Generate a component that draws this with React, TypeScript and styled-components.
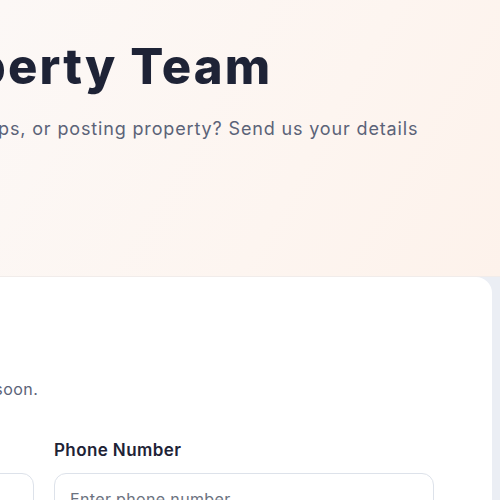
import React from "react";
import styled, { createGlobalStyle } from "styled-components";

const GlobalStyle = createGlobalStyle`
  html, body { margin: 0; padding: 0; background: #eef0f5; overflow: hidden; }
  body { font-family: Inter, "Noto Sans", sans-serif; -webkit-font-smoothing: antialiased; }
  * { box-sizing: border-box; }
`;

const Page = styled.div`
  width: 500px;
  height: 500px;
  overflow: hidden;
  background: #ebeef4;
`;

const Hero = styled.section`
  height: 277px;
  padding-top: 38px;
  background: linear-gradient(120deg, #fcf8f6 0%, #fdf5f0 60%, #fdf2eb 100%);
  border-bottom: 1px solid #f1ecea;
`;

const HeroInner = styled.div`
  margin-left: -443px;
  width: 1200px;
`;

const Title = styled.h1`
  margin: 0;
  font-size: 49px;
  line-height: 1.2;
  font-weight: 800;
  color: #1e2336;
  letter-spacing: 2.1px;
  white-space: nowrap;
`;

const Subtitle = styled.p`
  margin: 18px 0 0;
  font-size: 18px;
  line-height: 1.6;
  color: #5b6378;
  letter-spacing: 0.85px;
  white-space: nowrap;
`;

const Main = styled.main`
  padding-right: 8px;
`;

const Card = styled.div`
  margin-left: -402px;
  background: #ffffff;
  border-radius: 16px;
  padding: 46px 58px 40px 56px;
`;

const CardTitle = styled.h2`
  margin: 0;
  font-size: 28px;
  line-height: 1.3;
  font-weight: 700;
  color: #1e2336;
`;

const CardText = styled.p`
  margin: 18px 0 0;
  font-size: 16px;
  line-height: 1.6;
  color: #5b6378;
  letter-spacing: 0.42px;
  white-space: nowrap;
`;

const FormGrid = styled.div`
  margin-top: 35px;
  display: grid;
  grid-template-columns: 1fr 1fr;
  column-gap: 20px;
`;

const Field = styled.label`
  display: flex;
  flex-direction: column;
  gap: 10px;
`;

const Label = styled.span`
  font-size: 17px;
  line-height: 1.5;
  font-weight: 600;
  letter-spacing: 0.4px;
  color: #1e2336;
`;

const Input = styled.input`
  height: 52px;
  border: 1px solid #dde2ea;
  border-radius: 12px;
  padding: 0 15px;
  font-family: inherit;
  font-size: 16px;
  letter-spacing: 0.35px;
  color: #1e2336;
  background: #fff;
  outline: none;
  &::placeholder { color: #6b7280; }
`;

export default function App() {
  return (
    <Page>
      <GlobalStyle />
      <Hero>
        <HeroInner>
          <Title>Contact Our Property Team</Title>
          <Subtitle>Got questions about buying, renting, partnerships, or posting property? Send us your details</Subtitle>
        </HeroInner>
      </Hero>
      <Main>
        <Card>
          <CardTitle>Send a Message</CardTitle>
          <CardText>Fill in the form and our team will reach out soon.</CardText>
          <FormGrid>
            <Field>
              <Label>Full Name</Label>
              <Input placeholder="Enter your full name" />
            </Field>
            <Field>
              <Label>Phone Number</Label>
              <Input placeholder="Enter phone number" />
            </Field>
          </FormGrid>
        </Card>
      </Main>
    </Page>
  );
}
